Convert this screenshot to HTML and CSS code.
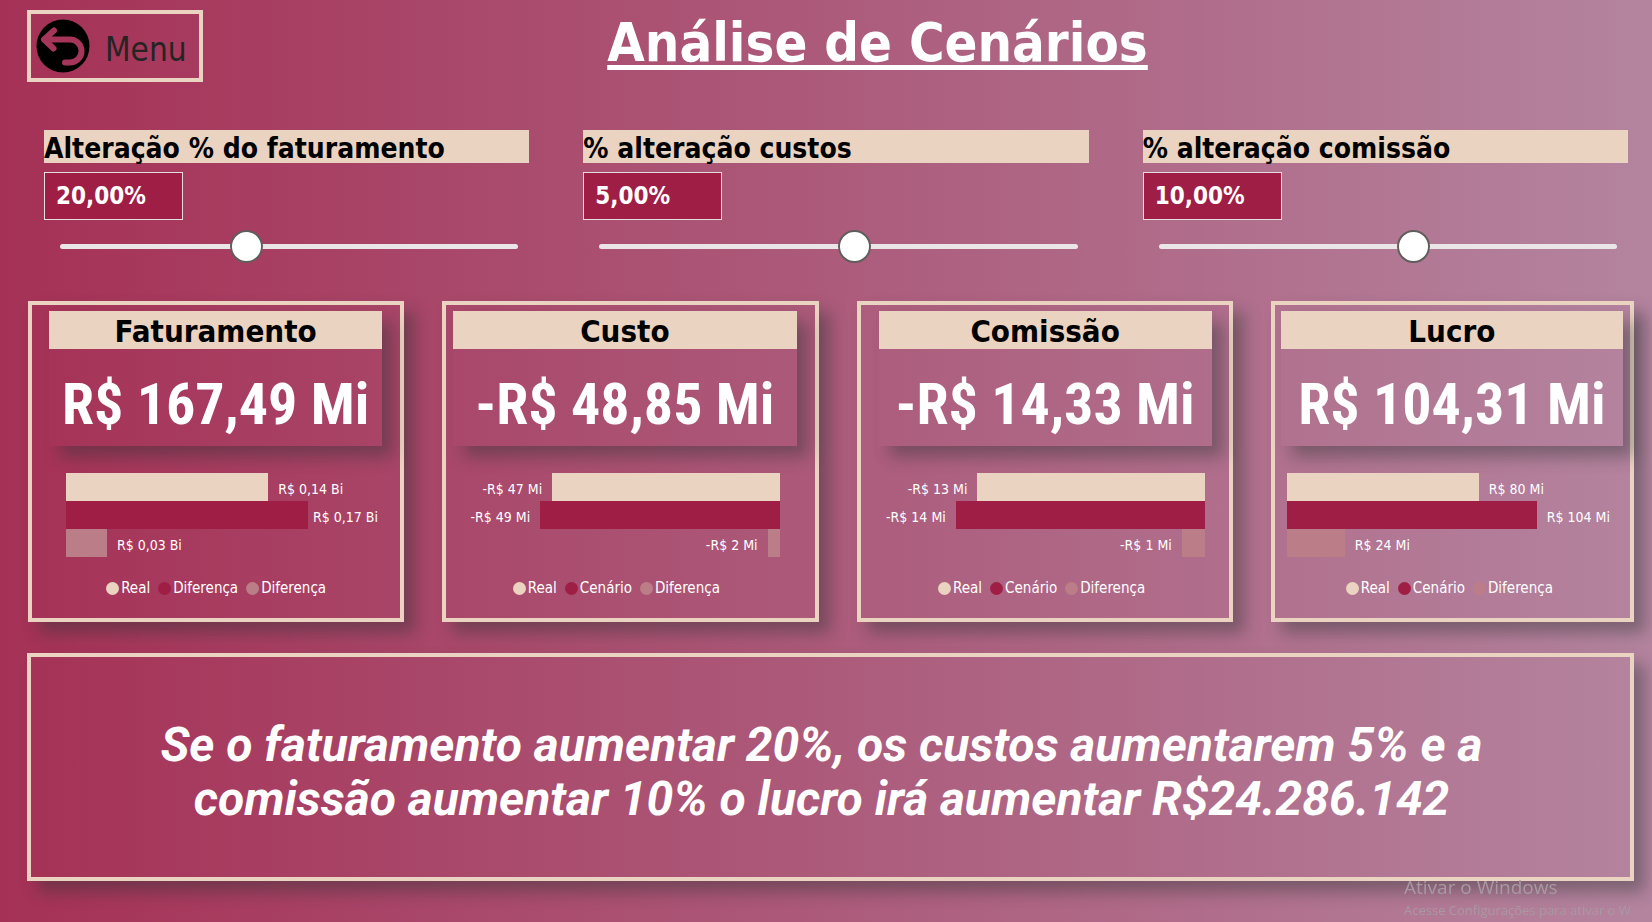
FILE: index.html
```html
<!DOCTYPE html>
<html lang="pt-BR">
<head>
<meta charset="utf-8">
<meta name="viewport" content="width=device-width, initial-scale=1">
<title>Análise de Cenários</title>
<link rel="stylesheet" href="styles.css">
</head>
<body>
<header class="header">
  <button class="menu" type="button">
    <svg class="menu-icon" viewBox="0 0 54 54" aria-hidden="true">
      <circle cx="27" cy="27" r="26.500"/>
      <path d="M18 11.500 L8 20.500 L17.500 29.500 M8 20.500 H34 A11.500 11.500 0 0 1 34 43.500 H29" />
    </svg>
    <span>Menu</span>
  </button>
  <h1 class="title">Análise de Cenários</h1>
</header>

<main>
  <section class="filters">
    <div class="filter">
      <label class="filter-name" for="fat">Alteração % do faturamento</label>
      <input class="filter-value" id="fat" type="text" value="20,00%">
      <input class="slider" type="range" min="-20" max="80" step="any" value="20" aria-label="Alteração % do faturamento">
    </div>
    <div class="filter">
      <label class="filter-name" for="cus">% alteração custos</label>
      <input class="filter-value" id="cus" type="text" value="5,00%">
      <input class="slider" type="range" min="-48.5" max="51.5" step="any" value="5" aria-label="% alteração custos">
    </div>
    <div class="filter">
      <label class="filter-name" for="com">% alteração comissão</label>
      <input class="filter-value" id="com" type="text" value="10,00%">
      <input class="slider" type="range" min="-46" max="54" step="any" value="10" aria-label="% alteração comissão">
    </div>
  </section>

  <section class="cards">
    <article class="card revenue">
      <div class="kpi">
        <h2>Faturamento</h2>
        <p>R$ 167,49 Mi</p>
      </div>
      <div class="chart">
        <div class="row"><i class="bar real" style="width:65.2%"></i><span>R$ 0,14 Bi</span></div>
        <div class="row near"><i class="bar scenario" style="width:78%"></i><span>R$ 0,17 Bi</span></div>
        <div class="row"><i class="bar diff" style="width:13.2%"></i><span>R$ 0,03 Bi</span></div>
      </div>
      <ul class="legend"><li class="real">Real</li><li class="scenario">Diferença</li><li class="diff">Diferença</li></ul>
    </article>
    <article class="card cost negative">
      <div class="kpi">
        <h2>Custo</h2>
        <p>-R$ 48,85 Mi</p>
      </div>
      <div class="chart">
        <div class="row"><i class="bar real" style="width:74%"></i><span>-R$ 47 Mi</span></div>
        <div class="row"><i class="bar scenario" style="width:77.9%"></i><span>-R$ 49 Mi</span></div>
        <div class="row"><i class="bar diff" style="width:3.9%"></i><span>-R$ 2 Mi</span></div>
      </div>
      <ul class="legend"><li class="real">Real</li><li class="scenario">Cenário</li><li class="diff">Diferença</li></ul>
    </article>
    <article class="card commission negative">
      <div class="kpi">
        <h2>Comissão</h2>
        <p>-R$ 14,33 Mi</p>
      </div>
      <div class="chart">
        <div class="row"><i class="bar real" style="width:71.2%"></i><span>-R$ 13 Mi</span></div>
        <div class="row"><i class="bar scenario" style="width:78%"></i><span>-R$ 14 Mi</span></div>
        <div class="row"><i class="bar diff" style="width:7.2%"></i><span>-R$ 1 Mi</span></div>
      </div>
      <ul class="legend"><li class="real">Real</li><li class="scenario">Cenário</li><li class="diff">Diferença</li></ul>
    </article>
    <article class="card profit">
      <div class="kpi">
        <h2>Lucro</h2>
        <p>R$ 104,31 Mi</p>
      </div>
      <div class="chart">
        <div class="row"><i class="bar real" style="width:59.6%"></i><span>R$ 80 Mi</span></div>
        <div class="row"><i class="bar scenario" style="width:77.6%"></i><span>R$ 104 Mi</span></div>
        <div class="row"><i class="bar diff" style="width:18%"></i><span>R$ 24 Mi</span></div>
      </div>
      <ul class="legend"><li class="real">Real</li><li class="scenario">Cenário</li><li class="diff">Diferença</li></ul>
    </article>
  </section>

  <section class="summary">
    <p>Se o faturamento aumentar 20%, os custos aumentarem 5% e a comissão aumentar 10% o lucro irá aumentar R$24.286.142</p>
  </section>
</main>

<aside class="activation">
  <strong>Ativar o Windows</strong>
  <span>Acesse Configurações para ativar o W</span>
</aside>
</body>
</html>
```
FILE: styles.css
```css
:root {
  --sand: #ead3c0;
  --wine: #9e1e46;
  --rose: #bb7e88;
  --shadow: 11px 11px 15px rgba(40, 50, 50, 0.4);
}

* { box-sizing: border-box; }

body {
  margin: 0;
  min-height: 100vh;
  overflow-x: hidden;
  background: linear-gradient(90deg, #a53156, #b4849f);
  color: #fff;
  font-family: "DejaVu Sans Condensed", "DejaVu Sans", Tahoma, sans-serif;
}

h1, h2, p, ul { margin: 0; padding: 0; }

.header {
  display: grid;
  grid-template-columns: 176px 1fr 100px;
  align-items: start;
  padding: 10px 0 0 27px;
}

.menu {
  display: flex;
  align-items: center;
  gap: 15px;
  height: 72px;
  padding: 0 5px;
  border: 4px solid var(--sand);
  background: none;
  color: #252423;
  font: inherit;
  font-size: 33px;
}
.menu span { padding-top: 6px; }
.menu-icon { width: 54px; height: 54px; flex: none; }
.menu-icon path {
  fill: none;
  stroke: #a5355a;
  stroke-width: 6;
  stroke-linecap: round;
  stroke-linejoin: round;
}

.title {
  font-size: 54px;
  line-height: 66px;
  text-align: center;
  text-decoration: underline;
  text-decoration-thickness: 5px;
  text-underline-offset: 4px;
  text-decoration-skip-ink: none;
}

.filters {
  display: grid;
  grid-template-columns: 485fr 505fr 485fr;
  gap: 54px;
  padding: 48px 24px 0 44px;
}
.filter { display: flex; flex-direction: column; align-items: flex-start; }
.filter-name {
  width: 100%;
  height: 33px;
  background: var(--sand);
  color: #000;
  font-size: 28px;
  font-weight: bold;
  line-height: 38px;
}
.filter-value {
  width: 139px;
  height: 48px;
  margin-top: 9px;
  padding: 0 11px;
  border: 1px solid #e6dde0;
  background: var(--wine);
  color: #fff;
  font: bold 24px "DejaVu Sans Condensed", "DejaVu Sans", Tahoma, sans-serif;
}
.slider {
  appearance: none;
  align-self: stretch;
  height: 34px;
  margin: 9px 11px 0 16px;
  background: none;
}
.slider::-webkit-slider-runnable-track {
  height: 5px;
  border-radius: 3px;
  background: #eae6e8;
}
.slider::-webkit-slider-thumb {
  appearance: none;
  width: 33px;
  height: 33px;
  margin-top: -14px;
  border: 2px solid #605e5c;
  border-radius: 50%;
  background: #fff;
}

.cards {
  display: grid;
  grid-template-columns: 376fr 376fr 376fr 363fr;
  gap: 38px;
  padding: 38px 18px 0 28px;
}
.card {
  height: 321px;
  padding-top: 6px;
  border: 4px solid var(--sand);
  box-shadow: var(--shadow);
}
.kpi { height: 135px; box-shadow: var(--shadow); text-align: center; }
.kpi h2 {
  height: 38px;
  background: var(--sand);
  color: #000;
  font-size: 31px;
  line-height: 41px;
}
.kpi p {
  font-family: "Roboto Condensed", Roboto, sans-serif;
  font-size: 58px;
  font-weight: bold;
  line-height: 110px;
  white-space: nowrap;
}
.revenue .kpi { margin: 0 18px 0 17px; }
.cost .kpi { margin: 0 18px 0 7px; }
.commission .kpi { margin: 0 17px 0 18px; }
.profit .kpi { margin: 0 7px 0 6px; }

.chart { padding-top: 27px; font-size: 14px; }
.revenue .chart { padding-left: 34px; padding-right: 24px; }
.cost .chart { padding-left: 26px; padding-right: 35px; }
.commission .chart { padding-left: 25px; padding-right: 24px; }
.profit .chart { padding-left: 12px; padding-right: 21px; }
.row { display: flex; align-items: center; gap: 10px; height: 28px; white-space: nowrap; }
.row span { flex: none; padding-top: 4px; }
.near { gap: 5px; }
.negative .row { flex-direction: row-reverse; }
.bar { flex: none; height: 28px; }
.real { --key: var(--sand); }
.scenario { --key: var(--wine); }
.diff { --key: var(--rose); }
.bar { background: var(--key); }

.legend {
  display: flex;
  justify-content: center;
  gap: 8px;
  padding: 21px 6px 0 0;
  list-style: none;
  font-size: 15px;
  line-height: 20px;
}
.revenue .legend { padding-right: 0; }
.cost .legend { padding-right: 28px; }
.legend li { display: flex; align-items: center; gap: 2px; }
.legend li::before {
  content: "";
  width: 13px;
  height: 13px;
  border-radius: 50%;
  background: var(--key);
}

.summary {
  display: flex;
  align-items: center;
  justify-content: center;
  height: 228px;
  margin: 31px 18px 40px 27px;
  padding: 10px 90px 0 72px;
  border: 4px solid var(--sand);
  box-shadow: var(--shadow);
  font: italic bold 48px/54px Roboto, sans-serif;
  text-align: center;
}

.activation {
  position: fixed;
  left: calc(100vw - 248px);
  bottom: 2px;
  display: flex;
  flex-direction: column;
  color: #a899a3;
  font-family: "Open Sans", "Noto Sans", sans-serif;
  font-size: 13px;
  line-height: 20px;
  white-space: nowrap;
}
.activation strong { font-size: 19px; font-weight: normal; line-height: 26px; }
```
